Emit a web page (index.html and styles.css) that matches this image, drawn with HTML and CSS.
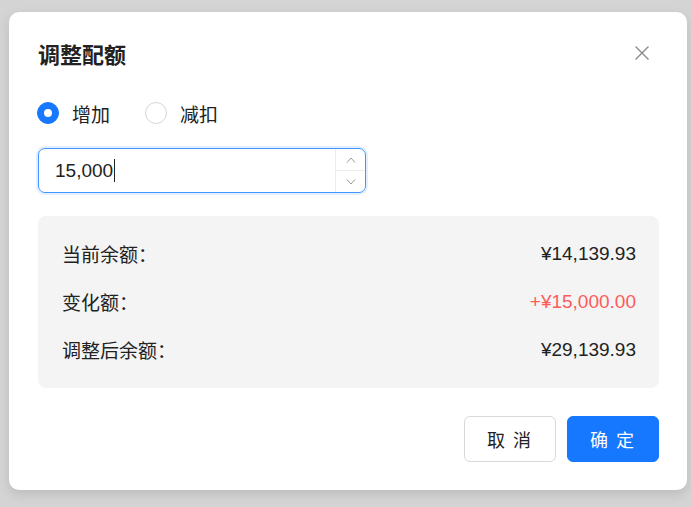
FILE: index.html
```html
<!DOCTYPE html>
<html lang="zh-CN">
<head>
  <meta charset="UTF-8" />
  <title>调整配额</title>
  <link rel="stylesheet" href="styles.css">
</head>
<body>
  <div class="modal">
    <div class="modal-header">
      <h2 class="modal-title">调整配额</h2>
      <span class="close">
        <svg width="16" height="16" viewBox="0 0 16 16"><path d="M1.5 1.5 L14.5 14.5 M14.5 1.5 L1.5 14.5" stroke="#8a8a8a" stroke-width="1.4" fill="none"/></svg>
      </span>
    </div>

    <div class="radio-group">
      <label class="radio checked"><span class="dot"></span>增加</label>
      <label class="radio"><span class="dot"></span>减扣</label>
    </div>

    <div class="number-input">
      <div class="value">15,000<span class="caret"></span></div>
      <div class="stepper">
        <span class="step">
          <svg width="10" height="6" viewBox="0 0 10 6"><path d="M1 5.5 L5 1 L9 5.5" stroke="#9a9a9a" stroke-width="1" fill="none"/></svg>
        </span>
        <span class="step">
          <svg width="10" height="6" viewBox="0 0 10 6"><path d="M1 0.5 L5 5 L9 0.5" stroke="#9a9a9a" stroke-width="1" fill="none"/></svg>
        </span>
      </div>
    </div>

    <div class="summary">
      <div class="row"><span>当前余额：</span><span>¥14,139.93</span></div>
      <div class="row"><span>变化额：</span><span class="plus">+¥15,000.00</span></div>
      <div class="row"><span>调整后余额：</span><span>¥29,139.93</span></div>
    </div>

    <div class="footer">
      <button class="btn">取 消</button>
      <button class="btn primary">确 定</button>
    </div>
  </div>
</body>
</html>
```

FILE: styles.css
```css
body {
  margin: 0;
  padding: 12px 0 0 9px;
  background-color: #d4d4d4;
  font-family: "Liberation Sans", "Noto Sans CJK SC", sans-serif;
  color: #222;
  height: 507px;
  box-sizing: border-box;
  overflow: hidden;
}

.modal {
  width: 678px;
  height: 478px;
  box-sizing: border-box;
  background: #fff;
  border-radius: 10px;
  box-shadow: 0 4px 12px rgba(0, 0, 0, 0.12);
  padding: 26px 28px 0 28px;
}

.modal-header {
  display: flex;
  justify-content: space-between;
  align-items: center;
  height: 30px;
  padding-left: 1px;
}

.modal-title {
  margin: 0;
  font-size: 22px;
  font-weight: bold;
  font-family: "Noto Sans CJK SC", sans-serif;
  line-height: 30px;
}

.close {
  display: flex;
  margin-right: 9px;
  width: 16px;
  height: 16px;
}

.radio-group {
  display: flex;
  gap: 35px;
  margin-top: 34px;
  height: 22px;
  align-items: center;
}

.radio {
  display: flex;
  align-items: center;
  gap: 13px;
  font-size: 19px;
  font-family: "Noto Sans CJK SC", sans-serif;
}

.dot {
  width: 20px;
  height: 20px;
  border: 1px solid #d6d6d6;
  border-radius: 50%;
  box-sizing: content-box;
  position: relative;
}

.radio.checked .dot {
  background: #1677ff;
  border-color: #1677ff;
}

.radio.checked .dot::after {
  content: "";
  position: absolute;
  left: 6px;
  top: 6px;
  width: 8px;
  height: 8px;
  border-radius: 50%;
  background: #fff;
}

.number-input {
  display: flex;
  margin-top: 24px;
  margin-left: 1px;
  width: 328px;
  height: 45px;
  box-sizing: border-box;
  border: 1.5px solid #4096ff;
  border-radius: 7px;
  box-shadow: 0 0 0 2px rgba(22, 119, 255, 0.12);
  overflow: hidden;
}

.value {
  flex: 1;
  display: flex;
  align-items: center;
  padding-left: 16px;
  font-size: 19px;
}

.caret {
  display: inline-block;
  width: 1px;
  height: 23px;
  background: #222;
  margin-left: 1px;
}

.stepper {
  width: 29px;
  display: flex;
  flex-direction: column;
  border-left: 1px solid #ececec;
}

.step {
  flex: 1;
  display: flex;
  align-items: center;
  justify-content: center;
}

.step + .step {
  border-top: 1px solid #ececec;
}

.summary {
  margin-top: 23px;
  margin-left: 1px;
  background: #f4f4f4;
  border-radius: 8px;
  padding: 26px 23px 26px 24px;
  display: flex;
  flex-direction: column;
  gap: 24px;
}

.row {
  display: flex;
  justify-content: space-between;
  font-size: 19px;
  line-height: 24px;
}

.row span:first-child {
  font-family: "Noto Sans CJK SC", sans-serif;
}

.plus {
  color: #ff5b5b;
}

.footer {
  display: flex;
  justify-content: flex-end;
  gap: 11px;
  margin-top: 28px;
}

.btn {
  width: 92px;
  height: 46px;
  border: 1px solid #d9d9d9;
  border-radius: 6px;
  background: #fff;
  color: #222;
  font-size: 18px;
  font-family: "Noto Sans CJK SC", sans-serif;
  letter-spacing: 2px;
  cursor: pointer;
}

.btn.primary {
  background: #1677ff;
  border-color: #1677ff;
  color: #fff;
}
```
